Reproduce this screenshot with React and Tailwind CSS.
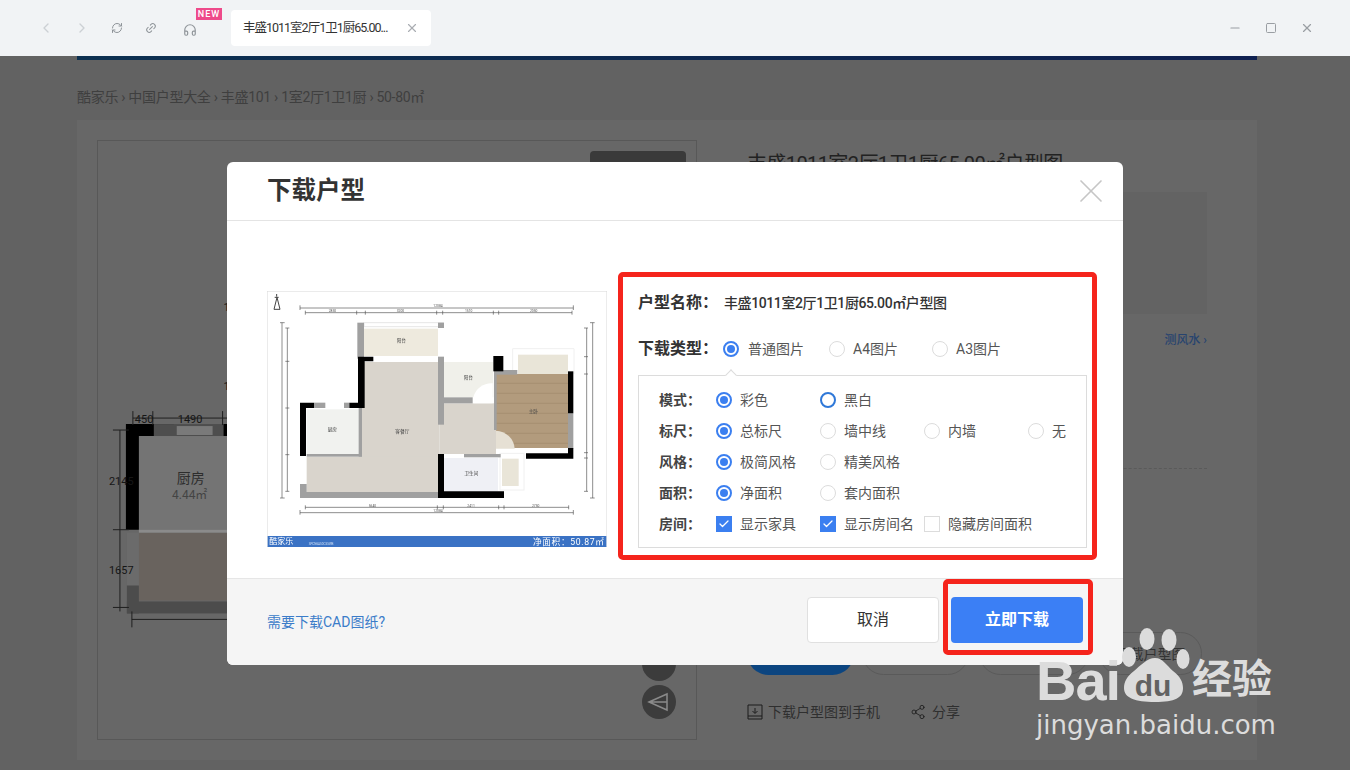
import React from 'react';
import { ChevronLeft, ChevronRight, RefreshCw, Link2, Headphones, X, Minus, Square, Share2, Check } from 'lucide-react';

const optionRows = [
  { label: '模式', kind: 'radio', items: [{ t: '彩色', on: true }, { t: '黑白', ring: true }] },
  { label: '标尺', kind: 'radio', items: [{ t: '总标尺', on: true }, { t: '墙中线' }, { t: '内墙' }, { t: '无' }] },
  { label: '风格', kind: 'radio', items: [{ t: '极简风格', on: true }, { t: '精美风格' }] },
  { label: '面积', kind: 'radio', items: [{ t: '净面积', on: true }, { t: '套内面积' }] },
  { label: '房间', kind: 'check', items: [{ t: '显示家具', on: true }, { t: '显示房间名', on: true }, { t: '隐藏房间面积' }] },
];

function Radio({ on, ring }) {
  if (on) {
    return (
      <span className="w-4 h-4 rounded-full border-2 border-[#3b7ff0] flex items-center justify-center shrink-0">
        <span className="w-2 h-2 rounded-full bg-[#3b7ff0]" />
      </span>
    );
  }
  if (ring) return <span className="w-4 h-4 rounded-full border-2 border-[#2f78d8] shrink-0" />;
  return <span className="w-4 h-4 rounded-full border border-[#dcdcdc] shrink-0" />;
}

function CheckBox({ on }) {
  if (on) {
    return (
      <span className="w-4 h-4 bg-[#3b7ff0] flex items-center justify-center shrink-0">
        <Check className="w-3 h-3 text-white" strokeWidth={2.5} />
      </span>
    );
  }
  return <span className="w-4 h-4 border border-[#dcdcdc] shrink-0" />;
}

function ModalPlan() {
  return (
    <svg viewBox="21 33 1020 768" className="w-[340px] h-[256px] block blur-[0.35px]">
      <rect x="21" y="33" width="1020" height="768" fill="#fff" stroke="#d8d8d8" strokeWidth="3" />
      <path d="M50 42v8M42 88l9-36 9 36zM44 52h12" stroke="#444" strokeWidth="3" fill="none" />
      <g stroke="#555" strokeWidth="2" fill="none">
        <path d="M120 84h820M120 76v14M940 76v14M136 98h800M136 92v12M290 92v12M316 92v12M530 92v12M548 92v12M700 92v12M716 92v12M936 92v12" />
        <path d="M120 698h820M120 690v14M940 690v14M136 682h790M136 676v12M532 676v12M550 676v12M716 676v12M732 676v12M926 676v12" />
        <path d="M66 128v526M60 128h14M60 654h14M82 144v490M76 144h12M76 244h12M76 384h12M76 524h12M76 634h12" />
        <path d="M998 128v526M990 128h14M990 654h14M980 144v490M972 144h12M972 230h12M972 282h12M972 518h12M972 534h12M972 634h12" />
      </g>
      <g fill="#555" fontSize="10">
        <text x="520" y="80">12084</text>
        <text x="206" y="96">2850</text>
        <text x="410" y="96">3200</text>
        <text x="615" y="96">1510</text>
        <text x="810" y="96">2050</text>
        <text x="520" y="696">12084</text>
        <text x="326" y="680">5640</text>
        <text x="622" y="680">2411</text>
        <text x="816" y="680">2750</text>
      </g>
      <rect x="312" y="146" width="222" height="82" fill="#eeeade" />
      <rect x="312" y="128" width="238" height="12" fill="none" stroke="#e6e6e6" strokeWidth="3" />
      <rect x="292" y="128" width="20" height="108" fill="#a0a0a0" />
      <rect x="534" y="128" width="18" height="16" fill="#a0a0a0" />
      <rect x="552" y="246" width="148" height="106" fill="#f0f0ea" />
      <rect x="306" y="246" width="232" height="390" fill="#d9d4cc" />
      <rect x="140" y="530" width="400" height="106" fill="#d9d4cc" />
      <rect x="538" y="370" width="170" height="152" fill="#d9d4cc" />
      <rect x="140" y="388" width="160" height="134" fill="#f1f2ef" />
      <rect x="708" y="282" width="216" height="222" fill="#b29b7d" />
      <path d="M708 310h216M708 340h216M708 370h216M708 400h216M708 430h216M708 460h216M708 490h216" stroke="#a08a6d" strokeWidth="2" />
      <path d="M708 452a58 58 0 0 1 56 54h-56z" fill="#e6e0d4" />
      <path d="M640 352a56 56 0 0 1 58-42v60h-58z" fill="#fff" />
      <rect x="774" y="224" width="150" height="58" fill="#e9e5d8" />
      <path d="M758 282v-76h184v76" fill="none" stroke="#f0f0f0" strokeWidth="3" />
      <rect x="552" y="534" width="162" height="100" fill="#eff0f5" />
      <rect x="726" y="536" width="50" height="82" fill="#e9e5d8" />
      <rect x="720" y="520" width="72" height="110" fill="none" stroke="#f0f0f0" strokeWidth="3" />
      <g fill="#a0a0a0">
        <rect x="534" y="230" width="18" height="204" />
        <rect x="552" y="352" width="86" height="18" />
        <rect x="702" y="270" width="70" height="14" />
        <rect x="702" y="270" width="8" height="180" />
        <rect x="924" y="400" width="16" height="106" />
        <rect x="612" y="522" width="110" height="10" />
        <rect x="120" y="612" width="20" height="40" />
        <rect x="120" y="636" width="420" height="18" />
        <rect x="162" y="368" width="34" height="16" />
        <rect x="252" y="368" width="16" height="16" />
        <rect x="296" y="384" width="10" height="146" />
        <rect x="140" y="522" width="166" height="8" />
      </g>
      <g fill="#000">
        <path d="M120 368h42v16h-24v144h-18z" />
        <path d="M268 368h26V230h46v14h-26v140h-46z" />
        <rect x="700" y="228" width="30" height="46" />
        <rect x="924" y="274" width="16" height="126" />
        <path d="M798 520h126v-16h16v32h-142z" />
        <path d="M534 522h18v112h180v20H534z" />
      </g>
      <g fill="#444" fontSize="14" textAnchor="middle">
        <text x="424" y="186">阳台</text>
        <text x="625" y="298">阳台</text>
        <text x="820" y="400">主卧</text>
        <text x="217" y="453">厨房</text>
        <text x="427" y="460">客餐厅</text>
        <text x="634" y="584">卫生间</text>
      </g>
      <rect x="23" y="768" width="1016" height="33" fill="#3a72c4" />
      <text x="28" y="792" fill="#fff" fontSize="24">酷家乐</text>
      <text x="146" y="794" fill="#cfe0f5" fontSize="9">SPCN6AS0C5SWB</text>
      <text x="1034" y="796" fill="#fff" fontSize="26" textAnchor="end" letterSpacing="2">净面积：50.87㎡</text>
    </svg>
  );
}

// floor plan behind the dialog, only its left part shows
function BackPlan() {
  return (
    <svg viewBox="97 140 600 600" className="w-full h-full block">
      <rect x="138" y="436" width="200" height="94" fill="#747474" />
      <rect x="138" y="533" width="200" height="68" fill="#69635e" />
      <path d="M126 533h12v68h-12z" fill="#6b6b6b" />
      <path d="M125 424h13v106h-13zM125 424h48v12h-48zM222 424h10v12h-10z" fill="#000" />
      <rect x="153" y="424" width="70" height="12" fill="#4e4e4e" />
      <rect x="176" y="426" width="36" height="9" fill="#7a7a7a" />
      <rect x="138" y="530" width="100" height="3" fill="#8b8b8b" />
      <rect x="126" y="586" width="12" height="28" fill="#4c4c4c" />
      <rect x="126" y="602" width="200" height="12" fill="#4c4c4c" />
      <g stroke="#1f1f1f" strokeWidth="1" fill="none">
        <path d="M132 418h120M132 411v14M152 411v14M222 411v14" />
        <path d="M119 430v182M112 430h16M112 530h16M112 608h16" />
        <path d="M131 620h120M131 612v16" />
      </g>
      <g fill="#161616" fontSize="11">
        <text x="134" y="423">450</text>
        <text x="177" y="423">1490</text>
        <text x="108" y="485">2145</text>
        <text x="108" y="574">1657</text>
        <text x="223" y="311">1</text>
        <text x="223" y="390">1</text>
      </g>
      <text x="190" y="483" fill="#2d2d2d" fontSize="14" textAnchor="middle">厨房</text>
      <text x="189" y="499" fill="#444" fontSize="12" textAnchor="middle">4.44㎡</text>
    </svg>
  );
}

function Watermark() {
  return (
    <div className="absolute left-[1036px] top-[628px] w-[244px] h-[120px] text-[#dcdcdc]">
      <div className="flex items-start h-[80px]">
        <span className="mt-[25px] w-[86px] text-[56px] leading-[56px] font-bold tracking-[-1px] font-['Liberation_Sans',sans-serif]">Bai</span>
        <svg viewBox="0 0 68 78" className="w-[68px] h-[78px] shrink-0 overflow-visible">
          <ellipse cx="25" cy="11" rx="7.500" ry="11" fill="currentColor" />
          <ellipse cx="47" cy="12" rx="7.500" ry="11" fill="currentColor" />
          <ellipse cx="7" cy="29" rx="7" ry="10" fill="currentColor" />
          <ellipse cx="61" cy="31" rx="6.500" ry="10" fill="currentColor" />
          <path d="M33 30c8 0 12 8 18 13 7 5 10 11 10 17 0 10-8 14-28 14S2 70 2 60c0-6 3-12 10-17 6-5 13-13 21-13z" fill="currentColor" />
          <text x="31" y="68" fontSize="30" fontWeight="700" textAnchor="middle" fill="#626262" fontFamily="Liberation Sans, sans-serif">du</text>
        </svg>
        <span className="ml-[2px] mt-[28px] text-[40px] leading-[48px] font-bold whitespace-nowrap">经验</span>
      </div>
      <div className="text-[26px] leading-[34px] whitespace-nowrap font-['DejaVu_Sans',sans-serif]">jingyan.baidu.com</div>
    </div>
  );
}

function App() {
  return (
    <div className="relative w-[1350px] h-[770px] overflow-hidden bg-[#626262] font-['Roboto','Noto_Sans_CJK_SC',sans-serif]">
      {/* window bar */}
      <div className="h-14 bg-[#f1f3f5] flex items-center">
        <div className="flex items-center w-[231px] text-[#b4b8bd]">
          <ChevronLeft className="w-4 h-4 ml-[38px] text-[#ccd0d4]" />
          <ChevronRight className="w-4 h-4 ml-5 text-[#ccd0d4]" />
          <RefreshCw className="w-3 h-3 ml-[21px] text-[#8f9499]" />
          <Link2 className="w-3 h-3 ml-[22px] -rotate-45 text-[#8f9499]" />
          <div className="relative ml-[26px]">
            <Headphones className="w-3.5 h-3.5 mt-1 text-[#8f9499]" />
            <span className="absolute left-[13px] top-[-11px] w-[26px] h-3 bg-[#ee4a8a] text-white text-[9px] leading-3 tracking-[1px] font-medium text-center">NEW</span>
          </div>
        </div>
        <div className="w-[200px] h-9 bg-white rounded flex items-center pl-3 pr-3 justify-between">
          <span className="text-[12.5px] tracking-[-1px] text-[#333] whitespace-nowrap">丰盛1011室2厅1卫1厨65.00...</span>
          <X className="w-3.5 h-3.5 text-[#a9adb2]" />
        </div>
        <div className="ml-auto flex items-center gap-[23px] pr-9 text-[#9a9ea3]">
          <Minus className="w-3.5 h-3.5" />
          <Square className="w-3 h-3" />
          <X className="w-3.5 h-3.5" />
        </div>
      </div>

      {/* page behind the dialog */}
      <div className="w-[1180px] ml-[77px]">
        <div className="h-1 bg-gradient-to-r from-[#0c3050] to-[#0f2050]" />
        <div className="h-[60px] flex items-center pt-[14px] text-sm tracking-[-0.3px] text-[#3f3f3f]">酷家乐 › 中国户型大全 › 丰盛101 › 1室2厅1卫1厨 › 50-80㎡</div>
        <div className="h-[640px] bg-[#676767] p-5 flex">
          <div className="relative w-[600px] h-[600px] border border-[#585858] shrink-0">
            <BackPlan />
            <div className="absolute left-[492px] top-[10px] w-24 h-10 rounded-sm bg-[#3a3a3a]" />
            <div className="absolute left-[544px] top-[506px] w-[34px] h-[34px] rounded-full bg-[#3c3c3c]" />
            <div className="absolute left-[544px] top-[544px] w-[34px] h-[34px] rounded-full bg-[#3c3c3c] flex items-center justify-center">
              <svg viewBox="0 0 24 24" className="w-6 h-6 text-[#8a8a8a]" fill="none" stroke="currentColor" strokeWidth="1.5">
                <path d="M2 12 20 4v16zM2 12h18" />
              </svg>
            </div>
          </div>
          <div className="ml-[50px] flex-1 mr-[30px]">
            <div className="text-xl tracking-[-0.6px] leading-7 mt-[10px] text-[#222] whitespace-nowrap">丰盛1011室2厅1卫1厨65.00㎡户型图</div>
            <div className="h-[122px] mt-[14px] bg-[#636363]" />
            <div className="text-xs text-right text-[#27446f] mt-[18px] font-medium">测风水 ›</div>
            <div className="h-px mt-[120px] border-t border-dashed border-[#5a5a5a]" />
            <div className="flex gap-2.5 mt-[163px]">
              <div className="w-[107px] h-[43px] rounded-full bg-[#0c4580] mr-[-2px]" />
              <div className="w-[107px] h-[43px] rounded-full border border-[#5a5a5a]" />
              <div className="w-[110px] h-[43px] rounded-full border border-[#5a5a5a]" />
              <div className="w-[103px] h-[43px] rounded-full border border-[#5a5a5a] flex items-center justify-center text-sm text-[#333]">下载户型图</div>
            </div>
            <div className="flex items-center mt-[27px] text-sm text-[#2f2f2f]">
              <svg viewBox="0 0 16 16" className="w-4 h-4" fill="none" stroke="#1d1d1d" strokeWidth="1">
                <path d="M1 12V1h14v11M1 12v3h14v-3M1 12h14M8 4v5M5.500 7 8 9.500 10.500 7" />
              </svg>
              <span className="ml-[5px]">下载户型图到手机</span>
              <Share2 className="w-4 h-4 ml-[30px] text-[#1d1d1d]" strokeWidth={1.25} />
              <span className="ml-1.5">分享</span>
            </div>
          </div>
        </div>
      </div>

      {/* dialog */}
      <div className="absolute left-[227px] top-[162px] w-[896px] h-[503px] bg-white rounded-md overflow-hidden flex flex-col">
        <div className="h-[59px] border-b border-[#e4e4e4] flex items-center justify-between pl-10 pr-3 shrink-0">
          <h2 className="text-[24.5px] font-bold text-[#333] mt-px">下载户型</h2>
          <X className="w-10 h-10 text-[#c6c6c6]" strokeWidth={1} />
        </div>
        <div className="flex-1 flex pl-10 pt-[70px]">
          <ModalPlan />
          <div className="ml-[31px] w-[449px]">
            <div className="h-6 flex items-center text-[#333]">
              <span className="w-[86px] shrink-0 text-base font-bold">户型名称：</span>
              <span className="text-sm tracking-[-0.4px] font-medium whitespace-nowrap">丰盛1011室2厅1卫1厨65.00㎡户型图</span>
            </div>
            <div className="h-6 mt-[22px] flex items-center text-sm text-[#555]">
              <span className="w-[85px] shrink-0 text-base font-bold text-[#333]">下载类型：</span>
              <Radio on />
              <span className="ml-[9px] w-[81px]">普通图片</span>
              <Radio />
              <span className="ml-2 w-[79px]">A4图片</span>
              <Radio />
              <span className="ml-2">A3图片</span>
            </div>
            <div className="relative mt-[14px] h-[173px] border border-[#dcdcdc] pl-5 pt-2">
              <span className="absolute left-[88px] top-[-5px] w-2 h-2 rotate-45 bg-white border-l border-t border-[#dcdcdc]" />
              {optionRows.map((row) => (
                <div key={row.label} className="h-[31px] flex items-center">
                  <span className="w-[57px] shrink-0 text-sm font-bold text-[#444]">{row.label}：</span>
                  {row.items.map((item) => (
                    <div key={item.t} className="w-[104px] shrink-0 flex items-center gap-2">
                      {row.kind === 'radio' ? <Radio on={item.on} ring={item.ring} /> : <CheckBox on={item.on} />}
                      <span className="text-sm text-[#555] whitespace-nowrap">{item.t}</span>
                    </div>
                  ))}
                </div>
              ))}
            </div>
          </div>
        </div>
        <div className="h-[87px] bg-[#f5f5f5] border-t border-[#e6e6e6] flex items-center pl-10 pr-10 pb-1 shrink-0">
          <a className="text-sm text-[#3b7cc9] mt-1">需要下载CAD图纸?</a>
          <button className="ml-auto w-[132px] h-[46px] bg-white border border-[#e0e0e0] rounded text-base text-[#333]">取消</button>
          <button className="ml-3 w-[132px] h-[46px] bg-[#3b7ff5] rounded text-base font-bold text-white">立即下载</button>
        </div>
      </div>

      {/* red marks added over the shot */}
      <div className="absolute left-[618px] top-[272px] w-[479px] h-[288px] border-[5px] border-[#f5241c] rounded-[5px]" />
      <div className="absolute left-[943px] top-[579px] w-[150px] h-[76px] border-[5px] border-[#f5241c] rounded-[5px]" />

      <Watermark />
    </div>
  );
}

export default App;
